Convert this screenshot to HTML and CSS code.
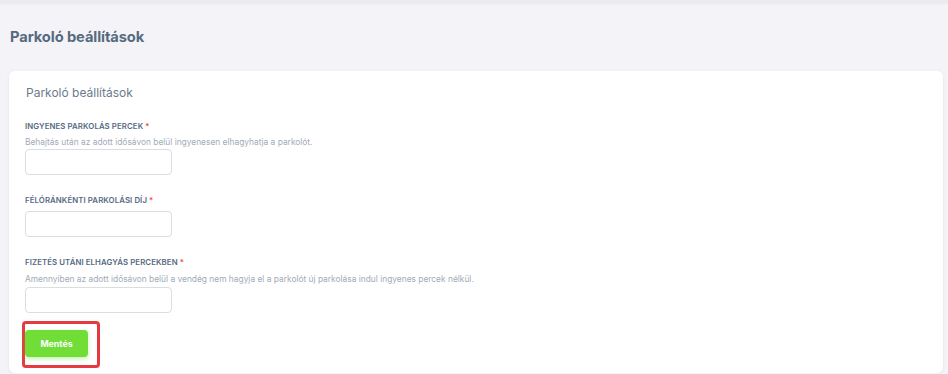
FILE: index.html
```html
<!DOCTYPE html>
<html lang="hu">
<head>
<meta charset="utf-8">
<meta name="viewport" content="width=device-width, initial-scale=1.0">
<link rel="stylesheet" href="styles.css">
</head>
<body>

<div class="topbar"></div>

<div class="content">
  <h4 class="page-title">Parkoló beállítások</h4>

  <div class="card">
    <h5 class="card-title">Parkoló beállítások</h5>

    <form>
      <div class="field">
        <label>Ingyenes parkolás percek <span class="req">*</span></label>
        <div class="help">Behajtás után az adott idősávon belül ingyenesen elhagyhatja a parkolót.</div>
        <input type="text">
      </div>

      <div class="field">
        <label>Félóránkénti parkolási díj <span class="req">*</span></label>
        <input type="text">
      </div>

      <div class="field field-last">
        <label>Fizetés utáni elhagyás percekben <span class="req">*</span></label>
        <div class="help">Amennyiben az adott idősávon belül a vendég nem hagyja el a parkolót új parkolása indul ingyenes percek nélkül.</div>
        <input type="text">
      </div>

      <div class="highlight">
        <button type="button" class="btn-success">Mentés</button>
      </div>
    </form>
  </div>
</div>

</body>
</html>
```

FILE: styles.css
```css
body {
  margin: 0;
  background-color: #f4f4f8;
  font-family: "Inter", "Noto Sans", sans-serif;
  color: #566a7f;
}

.topbar {
  height: 3px;
  background-color: #ebebf0;
  box-shadow: 0 1px 2px rgba(160, 160, 180, 0.15);
}

.content {
  padding: 0 5px 0 9px;
}

.page-title {
  margin: 24px 0 0 1px;
  font-size: 14.7px;
  font-weight: 700;
  line-height: 20px;
  letter-spacing: -0.1px;
}

.card {
  margin-top: 24px;
  background-color: #fff;
  border-radius: 6px;
  box-shadow: 0 1px 3px rgba(67, 89, 113, 0.12);
  padding: 14px 16px 5px 16px;
}

.card-title {
  margin: 0 0 20px 1px;
  font-size: 12px;
  font-weight: 400;
  line-height: 16px;
  color: #6b7b8e;
}

.field {
  margin-bottom: 20px;
}

.field-last {
  margin-bottom: 8px;
}

.field label {
  display: block;
  font-size: 7.8px;
  font-weight: 600;
  text-transform: uppercase;
  line-height: 11px;
  letter-spacing: 0.1px;
}

.req {
  color: #ff3e1d;
}

.help {
  margin-top: 5px;
  font-size: 8.4px;
  line-height: 11px;
  color: #a1acb8;
}

.field-last .help {
  margin-top: 6px;
}

.field input {
  display: block;
  box-sizing: border-box;
  margin-top: 5px;
  width: 147px;
  height: 26px;
  border: 1px solid #d9dee3;
  border-radius: 4px;
  background: #fff;
}

.field .help + input {
  margin-top: 1px;
}

.field-last .help + input {
  margin-top: 2px;
}

.highlight {
  display: inline-block;
  margin: 0 0 0 -3px;
  padding: 6px 9px 8px 0;
  border: 3px solid #e63a3e;
  border-radius: 4px;
}

.btn-success {
  display: block;
  width: 63px;
  height: 27px;
  border: 0;
  border-radius: 4px;
  background-color: #71dd37;
  box-shadow: 0 2px 4px rgba(113, 221, 55, 0.4);
  color: #fff;
  font-family: inherit;
  font-size: 8.8px;
  font-weight: 700;
}
```
